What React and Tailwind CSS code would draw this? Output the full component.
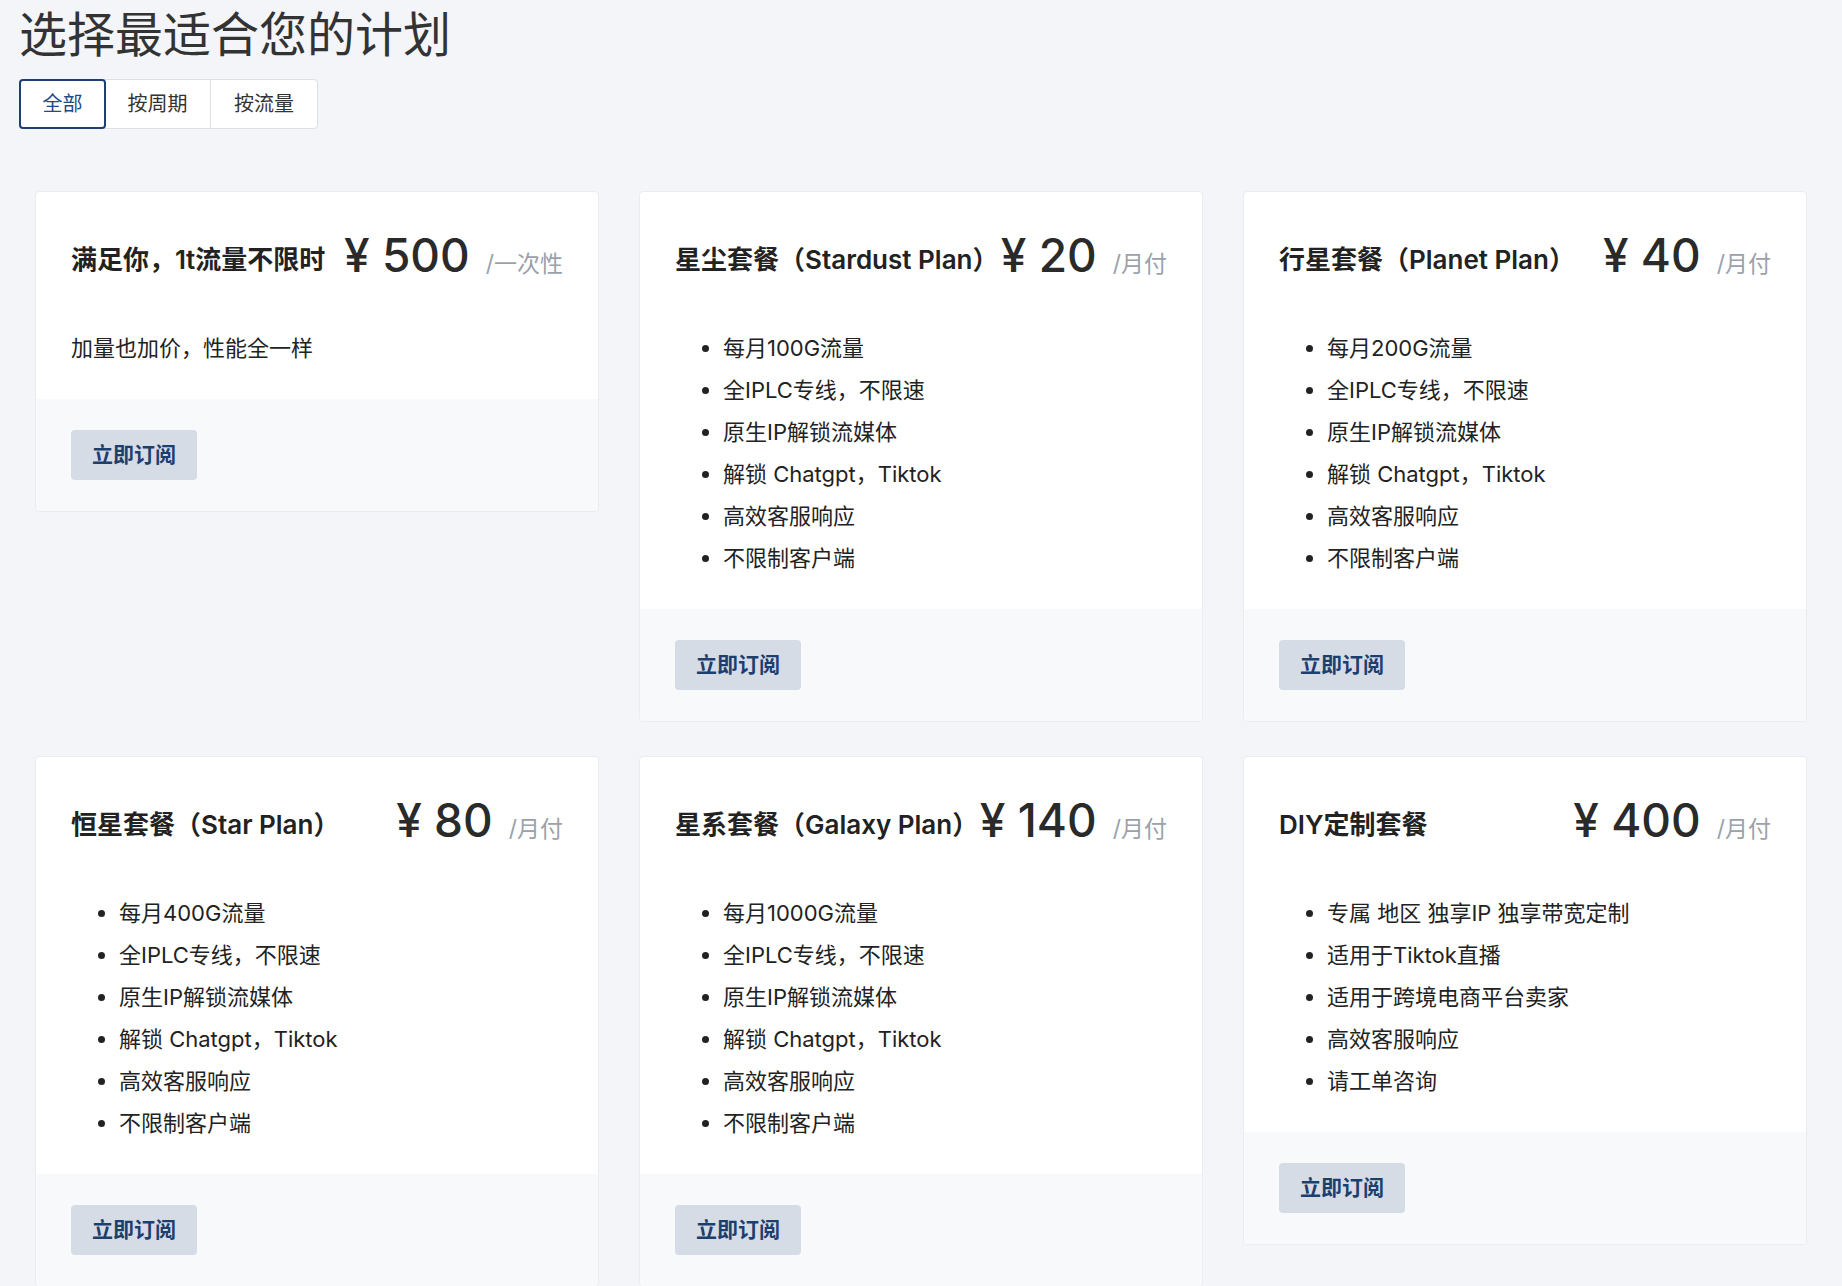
const plans = [
  { title: "满足你，1t流量不限时", price: "500", unit: "/一次性", desc: "加量也加价，性能全一样" },
  { title: "星尘套餐（Stardust Plan）", price: "20", unit: "/月付", items: ["每月100G流量", "全IPLC专线，不限速", "原生IP解锁流媒体", "解锁 Chatgpt，Tiktok", "高效客服响应", "不限制客户端"] },
  { title: "行星套餐（Planet Plan）", price: "40", unit: "/月付", items: ["每月200G流量", "全IPLC专线，不限速", "原生IP解锁流媒体", "解锁 Chatgpt，Tiktok", "高效客服响应", "不限制客户端"] },
  { title: "恒星套餐（Star Plan）", price: "80", unit: "/月付", items: ["每月400G流量", "全IPLC专线，不限速", "原生IP解锁流媒体", "解锁 Chatgpt，Tiktok", "高效客服响应", "不限制客户端"] },
  { title: "星系套餐（Galaxy Plan）", price: "140", unit: "/月付", items: ["每月1000G流量", "全IPLC专线，不限速", "原生IP解锁流媒体", "解锁 Chatgpt，Tiktok", "高效客服响应", "不限制客户端"] },
  { title: "DIY定制套餐", price: "400", unit: "/月付", items: ["专属 地区 独享IP 独享带宽定制", "适用于Tiktok直播", "适用于跨境电商平台卖家", "高效客服响应", "请工单咨询"] },
];

function Card({ p }) {
  return (
    <div className="bg-white border border-[#ebecf0] rounded-[4px] overflow-hidden">
      <div className="px-[35px] pt-[30px] pb-[30px]">
        <div className="flex items-center justify-between gap-[12px]">
          <div className="text-[26px] leading-[42px] font-semibold text-[#222]">{p.title}</div>
          <div className="flex items-baseline shrink-0 leading-[66px] whitespace-nowrap">
            <span className="text-[46px] font-medium text-[#2a2a2a]">¥ {p.price}</span>
            <span className="ml-[16px] text-[23px] text-[#9aa1ab]">{p.unit}</span>
          </div>
        </div>
        <div className="mt-[30px] text-[22px] leading-[42px] text-[#222]">
          {p.desc ? (
            <p>{p.desc}</p>
          ) : (
            <ul className="list-disc pl-[48px]">
              {p.items.map((it) => (
                <li key={it}>{it}</li>
              ))}
            </ul>
          )}
        </div>
      </div>
      <div className="bg-[#f8f9fb] px-[35px] py-[31px]">
        <button className="h-[50px] px-[21px] rounded-[4px] bg-[#d5dce6] text-[#1d3f6e] text-[21px] font-semibold">立即订阅</button>
      </div>
    </div>
  );
}

export default function App() {
  return (
    <div className="min-h-[1286px] bg-[#f4f5f9] px-[19px] pt-[7px] pb-[40px]" style={{ fontFamily: "Inter, 'Noto Sans CJK SC', sans-serif" }}>
      <h1 className="text-[48px] leading-[56px] font-normal text-[#333]">选择最适合您的计划</h1>
      <div className="mt-[16px] inline-flex h-[50px] bg-white border border-[#dcdfe4] rounded-[4px] text-[20px]">
        <button className="w-[87px] -m-px border-2 border-[#1e3f72] rounded-[4px] text-[#1e4a86]">全部</button>
        <button className="w-[106px] border-r border-[#dcdfe4] text-[#333]">按周期</button>
        <button className="w-[106px] text-[#333]">按流量</button>
      </div>
      <div className="mt-[62px] px-[16px] grid grid-cols-3 gap-x-[40px] gap-y-[34px] items-start">
        {plans.map((p) => (
          <Card key={p.title} p={p} />
        ))}
      </div>
    </div>
  );
}
